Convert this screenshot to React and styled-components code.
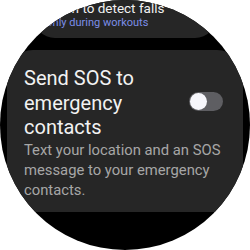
import React from 'react';
import styled, { createGlobalStyle } from 'styled-components';

const GlobalStyle = createGlobalStyle`
    html, body {
        margin: 0;
        padding: 0;
        background: #ffffff;
    }
    body {
        font-family: Roboto, "Liberation Sans", sans-serif;
    }
`;

const Watch = styled.div`
    width: 250px;
    height: 250px;
    border-radius: 50%;
    overflow: hidden;
    background: #000000;
`;

const List = styled.div`
    display: flex;
    flex-direction: column;
    align-items: center;
    gap: 12px;
    margin-top: -20px;
`;

const Card = styled.div`
    box-sizing: border-box;
    width: ${p => p.width}px;
    background: #262626;
    border-radius: ${p => p.radius}px;
    padding: ${p => p.pad};
`;

const SmallTitle = styled.div`
    color: #f2f2f2;
    font-size: 13.5px;
    line-height: 16px;
    white-space: nowrap;
`;

const SmallValue = styled.div`
    color: #7c8ee8;
    font-size: 11px;
    line-height: 14px;
    white-space: nowrap;
`;

const Header = styled.div`
    display: flex;
    justify-content: space-between;
    align-items: flex-start;
`;

const Title = styled.div`
    width: 160px;
    color: #f2f2f2;
    font-size: 20px;
    line-height: 24.5px;
`;

const Track = styled.div`
    display: flex;
    align-items: center;
    box-sizing: border-box;
    width: 34px;
    height: 19px;
    padding: 1px;
    margin-top: 26px;
    border-radius: 10px;
    background: #5e5e62;
`;

const Knob = styled.div`
    width: 17px;
    height: 17px;
    border-radius: 50%;
    background: #f6f6fb;
`;

const Description = styled.div`
    color: #a6a6a6;
    font-size: 14.8px;
    line-height: 20px;
`;

const Toggle = () => (
    <Track>
        <Knob />
    </Track>
);

const App = () => {
    return (
        <>
            <GlobalStyle />
            <Watch>
                <List>
                    <Card width={184} radius={22} pad="20px 10px 8px 12px">
                        <SmallTitle>When to detect falls</SmallTitle>
                        <SmallValue>Only during workouts</SmallValue>
                    </Card>
                    <Card width={236} radius={26} pad="16px 20px 12px 17px">
                        <Header>
                            <Title>Send SOS to emergency contacts</Title>
                            <Toggle />
                        </Header>
                        <Description>
                            Text your location and an SOS message to your emergency contacts.
                        </Description>
                    </Card>
                </List>
            </Watch>
        </>
    );
};

export default App;
